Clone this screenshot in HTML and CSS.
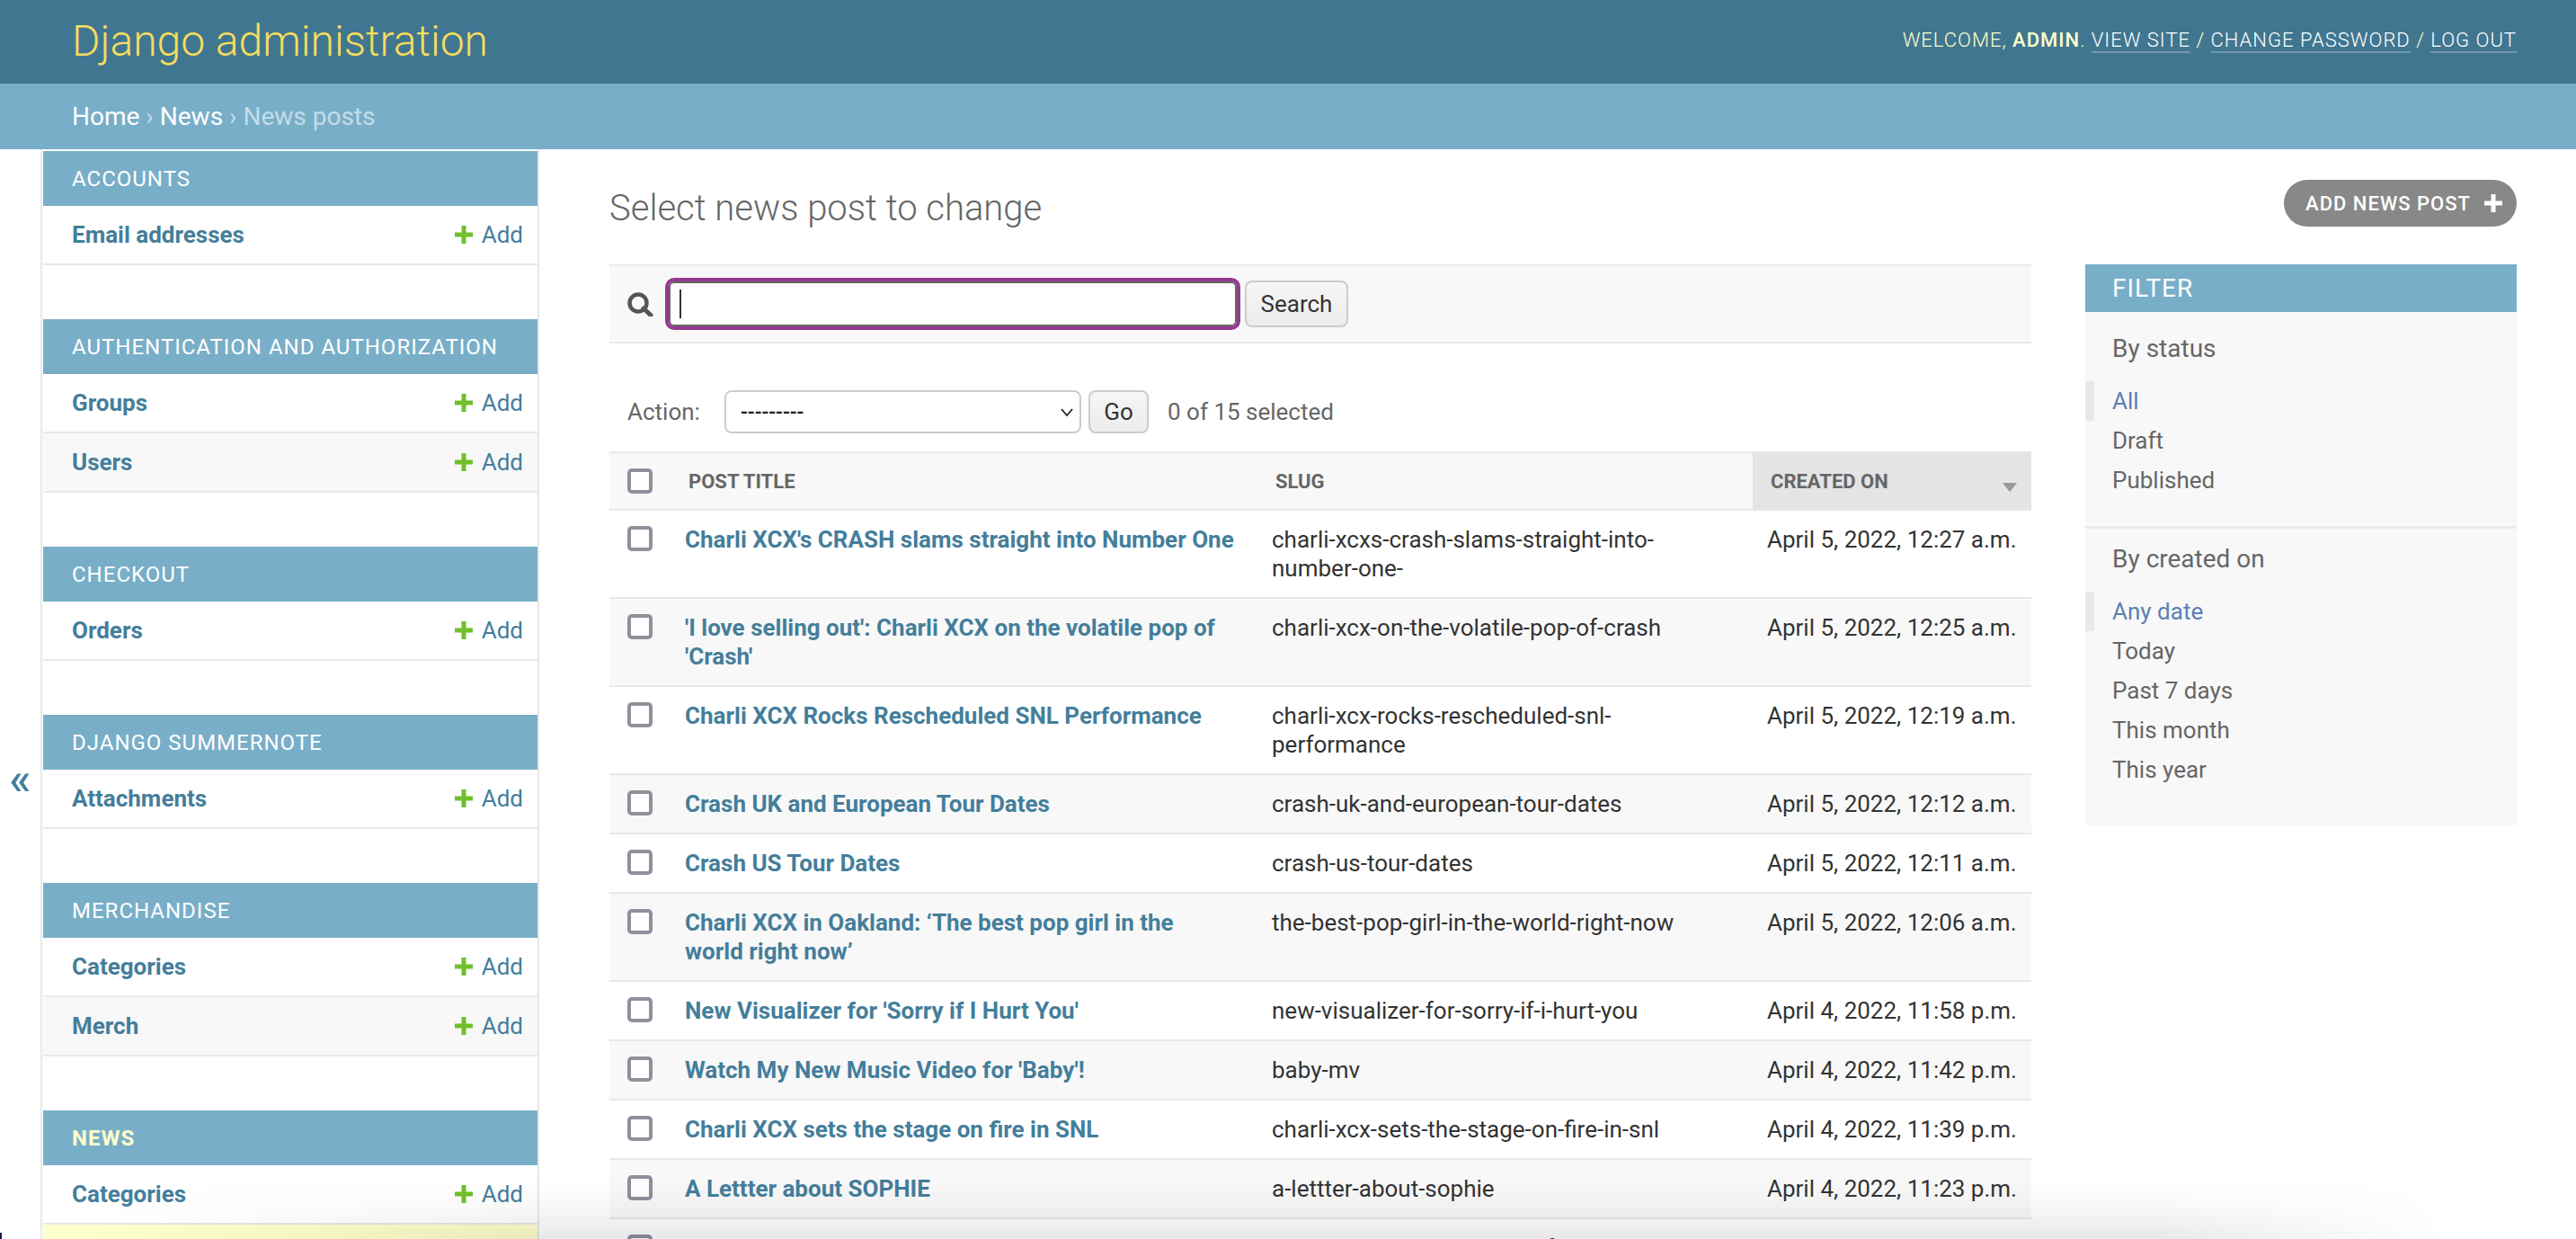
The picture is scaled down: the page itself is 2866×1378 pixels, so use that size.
FILE: index.html
```html
<!DOCTYPE html>
<html lang="en">
<head>
  <meta charset="UTF-8" />
  <title>Select news post to change | Django site admin</title>
  <link rel="stylesheet" href="styles.css">
</head>
<body>

  <!-- Header -->
  <header class="site-header">
    <div class="site-name">Django administration</div>
    <div class="user-tools">
      Welcome, <strong>admin</strong>.
      <a href="#">View site</a> /
      <a href="#">Change password</a> /
      <a href="#">Log out</a>
    </div>
  </header>

  <div class="breadcrumbs">
    <a href="#">Home</a> › <a href="#">News</a> › News posts
  </div>

  <div class="main">
    <!-- Sidebar -->
    <div class="sidebar-toggle">«</div>
    <nav class="sidebar">
      <div class="module">
        <div class="caption">Accounts</div>
        <div class="model-row"><a class="model-name" href="#">Email addresses</a><a class="add-link" href="#"><svg viewBox="0 0 20 20"><path d="M7.5 0h5v7.5H20v5h-7.5V20h-5v-7.500H0v-5h7.500z"/></svg>Add</a></div>
      </div>
      <div class="module">
        <div class="caption">Authentication and Authorization</div>
        <div class="model-row"><a class="model-name" href="#">Groups</a><a class="add-link" href="#"><svg viewBox="0 0 20 20"><path d="M7.5 0h5v7.5H20v5h-7.5V20h-5v-7.500H0v-5h7.500z"/></svg>Add</a></div>
        <div class="model-row"><a class="model-name" href="#">Users</a><a class="add-link" href="#"><svg viewBox="0 0 20 20"><path d="M7.5 0h5v7.5H20v5h-7.5V20h-5v-7.500H0v-5h7.500z"/></svg>Add</a></div>
      </div>
      <div class="module">
        <div class="caption">Checkout</div>
        <div class="model-row"><a class="model-name" href="#">Orders</a><a class="add-link" href="#"><svg viewBox="0 0 20 20"><path d="M7.5 0h5v7.5H20v5h-7.5V20h-5v-7.500H0v-5h7.500z"/></svg>Add</a></div>
      </div>
      <div class="module">
        <div class="caption">Django Summernote</div>
        <div class="model-row"><a class="model-name" href="#">Attachments</a><a class="add-link" href="#"><svg viewBox="0 0 20 20"><path d="M7.5 0h5v7.5H20v5h-7.5V20h-5v-7.500H0v-5h7.500z"/></svg>Add</a></div>
      </div>
      <div class="module">
        <div class="caption">Merchandise</div>
        <div class="model-row"><a class="model-name" href="#">Categories</a><a class="add-link" href="#"><svg viewBox="0 0 20 20"><path d="M7.5 0h5v7.5H20v5h-7.5V20h-5v-7.500H0v-5h7.500z"/></svg>Add</a></div>
        <div class="model-row"><a class="model-name" href="#">Merch</a><a class="add-link" href="#"><svg viewBox="0 0 20 20"><path d="M7.5 0h5v7.5H20v5h-7.5V20h-5v-7.500H0v-5h7.500z"/></svg>Add</a></div>
      </div>
      <div class="module">
        <div class="caption current">News</div>
        <div class="model-row"><a class="model-name" href="#">Categories</a><a class="add-link" href="#"><svg viewBox="0 0 20 20"><path d="M7.5 0h5v7.5H20v5h-7.5V20h-5v-7.500H0v-5h7.500z"/></svg>Add</a></div>
        <div class="model-row current"><a class="model-name" href="#">News posts</a><a class="add-link" href="#"><svg viewBox="0 0 20 20"><path d="M7.5 0h5v7.5H20v5h-7.5V20h-5v-7.500H0v-5h7.500z"/></svg>Add</a></div>
      </div>
    </nav>

    <!-- Content -->
    <main class="content">
      <div class="content-head">
        <h1>Select news post to change</h1>
        <a class="add-button" href="#">Add news post<svg viewBox="0 0 20 20"><path d="M7.5 0h5v7.5H20v5h-7.5V20h-5v-7.500H0v-5h7.500z"/></svg></a>
      </div>

      <div class="changelist">
        <div class="results">
          <div class="toolbar">
            <svg class="search-icon" viewBox="0 0 29 27"><circle cx="12" cy="12" r="9.500" fill="none" stroke="#555" stroke-width="4.500"/><path d="M18 18l8 7.500" stroke="#555" stroke-width="5" stroke-linecap="round"/></svg>
            <div class="search-box">
              <input type="text" />
              <span class="caret"></span>
            </div>
            <button class="btn search-btn">Search</button>
          </div>

          <div class="actions">
            <span class="action-label">Action:</span>
            <div class="action-select">---------<svg viewBox="0 0 14 9"><path d="M1 1l6 7 6-7" fill="none" stroke="#222" stroke-width="1.800"/></svg></div>
            <button class="btn go-btn">Go</button>
            <span class="action-counter">0 of 15 selected</span>
          </div>

          <table>
            <colgroup>
              <col class="col-check"><col class="col-title"><col class="col-slug"><col class="col-date">
            </colgroup>
            <thead>
              <tr>
                <th><span class="checkbox"></span></th>
                <th>Post title</th>
                <th>Slug</th>
                <th class="sorted">Created on<span class="sort-arrow"></span></th>
              </tr>
            </thead>
            <tbody>
              <tr><td class="check-cell"><span class="checkbox"></span></td><td class="title-cell"><a href="#">Charli XCX's CRASH slams straight into Number One</a></td><td>charli-xcxs-crash-slams-straight-into-number-one-</td><td class="date-cell">April 5, 2022, 12:27 a.m.</td></tr>
              <tr><td class="check-cell"><span class="checkbox"></span></td><td class="title-cell"><a href="#">'I love selling out': Charli XCX on the volatile pop of 'Crash'</a></td><td>charli-xcx-on-the-volatile-pop-of-crash</td><td class="date-cell">April 5, 2022, 12:25 a.m.</td></tr>
              <tr><td class="check-cell"><span class="checkbox"></span></td><td class="title-cell"><a href="#">Charli XCX Rocks Rescheduled SNL Performance</a></td><td>charli-xcx-rocks-rescheduled-snl-performance</td><td class="date-cell">April 5, 2022, 12:19 a.m.</td></tr>
              <tr><td class="check-cell"><span class="checkbox"></span></td><td class="title-cell"><a href="#">Crash UK and European Tour Dates</a></td><td>crash-uk-and-european-tour-dates</td><td class="date-cell">April 5, 2022, 12:12 a.m.</td></tr>
              <tr><td class="check-cell"><span class="checkbox"></span></td><td class="title-cell"><a href="#">Crash US Tour Dates</a></td><td>crash-us-tour-dates</td><td class="date-cell">April 5, 2022, 12:11 a.m.</td></tr>
              <tr><td class="check-cell"><span class="checkbox"></span></td><td class="title-cell"><a href="#">Charli XCX in Oakland: ‘The best pop girl in the world right now’</a></td><td>the-best-pop-girl-in-the-world-right-now</td><td class="date-cell">April 5, 2022, 12:06 a.m.</td></tr>
              <tr><td class="check-cell"><span class="checkbox"></span></td><td class="title-cell"><a href="#">New Visualizer for 'Sorry if I Hurt You'</a></td><td>new-visualizer-for-sorry-if-i-hurt-you</td><td class="date-cell">April 4, 2022, 11:58 p.m.</td></tr>
              <tr><td class="check-cell"><span class="checkbox"></span></td><td class="title-cell"><a href="#">Watch My New Music Video for 'Baby'!</a></td><td>baby-mv</td><td class="date-cell">April 4, 2022, 11:42 p.m.</td></tr>
              <tr><td class="check-cell"><span class="checkbox"></span></td><td class="title-cell"><a href="#">Charli XCX sets the stage on fire in SNL</a></td><td>charli-xcx-sets-the-stage-on-fire-in-snl</td><td class="date-cell">April 4, 2022, 11:39 p.m.</td></tr>
              <tr><td class="check-cell"><span class="checkbox"></span></td><td class="title-cell"><a href="#">A Lettter about SOPHIE</a></td><td>a-lettter-about-sophie</td><td class="date-cell">April 4, 2022, 11:23 p.m.</td></tr>
              <tr><td class="check-cell"><span class="checkbox"></span></td><td class="title-cell"><a href="#">Charli XCX on the making of her new album</a></td><td>charli-xcx-on-the-making-of-her-new-album</td><td class="date-cell">April 4, 2022, 11:12 p.m.</td></tr>
            </tbody>
          </table>
        </div>

        <!-- Filter -->
        <aside class="filter">
          <h2>Filter</h2>
          <div class="filter-group">
            <h3>By status</h3>
            <ul>
              <li class="selected"><a href="#">All</a></li>
              <li><a href="#">Draft</a></li>
              <li><a href="#">Published</a></li>
            </ul>
          </div>
          <div class="filter-group">
            <h3>By created on</h3>
            <ul>
              <li class="selected"><a href="#">Any date</a></li>
              <li><a href="#">Today</a></li>
              <li><a href="#">Past 7 days</a></li>
              <li><a href="#">This month</a></li>
              <li><a href="#">This year</a></li>
            </ul>
          </div>
        </aside>
      </div>
    </main>
  </div>

  <div class="bottom-shadow"></div>
  <div class="edge-mark"></div>
</body>
</html>
```

FILE: styles.css
```css
* {
  box-sizing: border-box;
  margin: 0;
  padding: 0;
}

html, body {
  height: 1378px;
  overflow: hidden;
  background: #fff;
  color: #333;
  font-family: Roboto, "Liberation Sans", sans-serif;
  font-size: 26px;
}

a {
  color: #447e9b;
  text-decoration: none;
}

/* Header */
.site-header {
  height: 93px;
  padding: 0 66px 0 80px;
  display: flex;
  justify-content: space-between;
  align-items: center;
  background: #417690;
  color: #ffc;
}

.site-name {
  font-size: 48px;
  font-weight: 300;
  color: #f5dd5d;
  margin-top: -3px;
}

.user-tools {
  font-size: 22px;
  font-weight: 300;
  letter-spacing: 1px;
  text-transform: uppercase;
  margin-top: -4px;
}

.user-tools strong {
  font-weight: 500;
}

.user-tools a {
  color: #fff;
  border-bottom: 2px solid rgba(255, 255, 255, 0.25);
}

.breadcrumbs {
  height: 73px;
  padding: 0 80px;
  display: flex;
  align-items: center;
  gap: 7px;
  background: #79aec8;
  color: #c4dce8;
  font-size: 28px;
  font-weight: 400;
}

.breadcrumbs a {
  color: #fff;
}

.main {
  display: flex;
  height: 1212px;
}

/* Sidebar */
.sidebar-toggle {
  flex: 0 0 47px;
  border-right: 2px solid #e8e8e8;
  display: flex;
  align-items: center;
  justify-content: center;
  padding-top: 188px;
  color: #447e9b;
  font-size: 50px;
  font-weight: 500;
}

.sidebar {
  flex: 0 0 553px;
  padding-top: 2px;
  border-left: 1px solid #fff;
  border-right: 2px solid #e8e8e8;
}

.module {
  margin-bottom: 60px;
}

.caption {
  height: 61px;
  padding: 0 32px;
  display: flex;
  align-items: center;
  background: #79aec8;
  color: #fff;
  font-size: 24px;
  letter-spacing: 1px;
  text-transform: uppercase;
}

.caption.current {
  color: #ffc;
  font-weight: 700;
}

.model-row {
  height: 66px;
  padding: 0 16px 0 32px;
  display: flex;
  justify-content: space-between;
  align-items: center;
  border-bottom: 2px solid #e8e8e8;
}

.model-row:nth-child(odd) {
  background: #f8f8f8;
}

.model-row.current {
  background: #ffc;
}

.model-name {
  font-weight: 700;
}

.add-link {
  display: flex;
  align-items: center;
  gap: 10px;
}

.add-link svg {
  width: 20px;
  height: 20px;
  fill: #70bf2b;
}

/* Content */
.content {
  flex: 1;
  padding: 34px 66px 0 78px;
}

.content-head {
  display: flex;
  justify-content: space-between;
  height: 94px;
}

h1 {
  font-size: 40px;
  font-weight: 300;
  color: #666;
  line-height: 52px;
  padding-top: 6px;
}

.add-button {
  height: 52px;
  padding: 0 16px 0 24px;
  display: flex;
  align-items: center;
  gap: 15px;
  border-radius: 26px;
  background: #888;
  color: #fff;
  font-size: 22px;
  font-weight: 500;
  letter-spacing: 1px;
  text-transform: uppercase;
}

.add-button svg {
  width: 20px;
  height: 20px;
  fill: #fff;
}

.changelist {
  display: flex;
  gap: 60px;
  align-items: flex-start;
}

.results {
  flex: 0 0 1582px;
}

.toolbar {
  height: 88px;
  padding: 0 20px;
  display: flex;
  align-items: center;
  border-top: 2px solid #eaeaea;
  border-bottom: 2px solid #eaeaea;
  background: #f8f8f8;
}

.search-icon {
  width: 29px;
  height: 27px;
  margin-right: 17px;
}

.search-box {
  position: relative;
  width: 632px;
  height: 50px;
  margin-right: 9px;
}

.search-box input {
  display: block;
  width: 100%;
  height: 100%;
  border: 2px solid #666;
  border-radius: 6px;
  outline: 4px solid #95398f;
  outline-offset: 0;
}

.caret {
  position: absolute;
  left: 12px;
  top: 9px;
  width: 2px;
  height: 32px;
  background: #333;
}

.btn {
  height: 52px;
  border: 2px solid #ccc;
  border-radius: 8px;
  background: linear-gradient(#f6f6f6, #ececec);
  color: #333;
  font-family: inherit;
  font-size: 26px;
}

.search-btn {
  width: 115px;
}

.actions {
  height: 120px;
  padding: 52px 20px 20px;
  display: flex;
  align-items: center;
  color: #666;
}

.action-label {
  width: 108px;
}

.action-select {
  width: 397px;
  height: 48px;
  padding: 0 7px 0 16px;
  margin-right: 8px;
  display: flex;
  justify-content: space-between;
  align-items: center;
  border: 2px solid #ccc;
  border-radius: 8px;
  background: #fff;
  color: #222;
  font-size: 23px;
  font-weight: 500;
}

.action-select svg {
  width: 14px;
  height: 9px;
}

.go-btn {
  width: 67px;
  height: 48px;
  margin-right: 21px;
}

table {
  width: 100%;
  table-layout: fixed;
  border-collapse: collapse;
}

.col-check { width: 67px; }
.col-title { width: 653px; }
.col-slug { width: 552px; }
.col-date { width: 310px; }

th {
  position: relative;
  height: 64px;
  padding: 0 21px;
  text-align: left;
  background: #f8f8f8;
  border-top: 2px solid #e8e8e8;
  border-bottom: 2px solid #e8e8e8;
  color: #666;
  font-size: 22px;
  font-weight: 700;
  text-transform: uppercase;
}

th:first-child {
  padding-left: 20px;
}

th.sorted {
  background: #e4e4e4;
  padding-left: 20px;
}

.sort-arrow {
  position: absolute;
  right: 16px;
  top: 33px;
  width: 0;
  height: 0;
  border-left: 8px solid transparent;
  border-right: 8px solid transparent;
  border-top: 10px solid #999;
}

td {
  padding: 16px 17px;
  line-height: 32px;
  vertical-align: top;
  border-bottom: 2px solid #e8e8e8;
}

td:first-child {
  padding-left: 20px;
}

td.check-cell {
  padding-top: 17px;
}

td.title-cell {
  padding-right: 23px;
}

td.date-cell {
  padding: 16px 0 16px 16px;
  white-space: nowrap;
}

tbody tr:nth-child(even) td {
  background: #f8f8f8;
}

td a {
  font-weight: 700;
}

.checkbox {
  display: block;
  width: 28px;
  height: 28px;
  border: 4px solid #8f8f9d;
  border-radius: 5px;
  background: #fff;
}

/* Filter */
.filter {
  flex: 0 0 480px;
  height: 624px;
  background: #f8f8f8;
  color: #666;
}

.filter h2 {
  height: 53px;
  padding: 0 30px;
  display: flex;
  align-items: center;
  background: #79aec8;
  color: #fff;
  font-size: 28px;
  font-weight: 400;
  letter-spacing: 1px;
  text-transform: uppercase;
}

.filter-group {
  padding: 14px 0 29px;
  border-bottom: 3px solid #eaeaea;
}

.filter-group:first-of-type {
  padding-top: 21px;
}

.filter-group:last-child {
  border-bottom: 0;
}

.filter h3 {
  padding: 0 30px;
  margin-bottom: 16px;
  font-size: 28px;
  line-height: 40px;
  font-weight: 400;
}

.filter ul {
  list-style: none;
}

.filter li {
  height: 44px;
  padding: 0 30px;
  display: flex;
  align-items: center;
}

.filter li a {
  color: #666;
}

.filter li.selected {
  padding-left: 20px;
  border-left: 10px solid #e8e8e8;
}

.filter li.selected a {
  color: #5b80b2;
}

/* Window shadow along the bottom edge */
.bottom-shadow {
  position: absolute;
  left: 0;
  right: 0;
  bottom: 0;
  height: 70px;
  pointer-events: none;
  background: linear-gradient(to top, rgba(0, 0, 0, 0.09), rgba(0, 0, 0, 0.025) 55%, rgba(0, 0, 0, 0));
  -webkit-mask-image: linear-gradient(to right, transparent 100px, #000 620px, #000 2400px, transparent 2720px);
  mask-image: linear-gradient(to right, transparent 100px, #000 620px, #000 2400px, transparent 2720px);
}

.edge-mark {
  position: absolute;
  left: 0;
  bottom: 0;
  width: 2px;
  height: 7px;
  background: #1e1b4b;
}
```
